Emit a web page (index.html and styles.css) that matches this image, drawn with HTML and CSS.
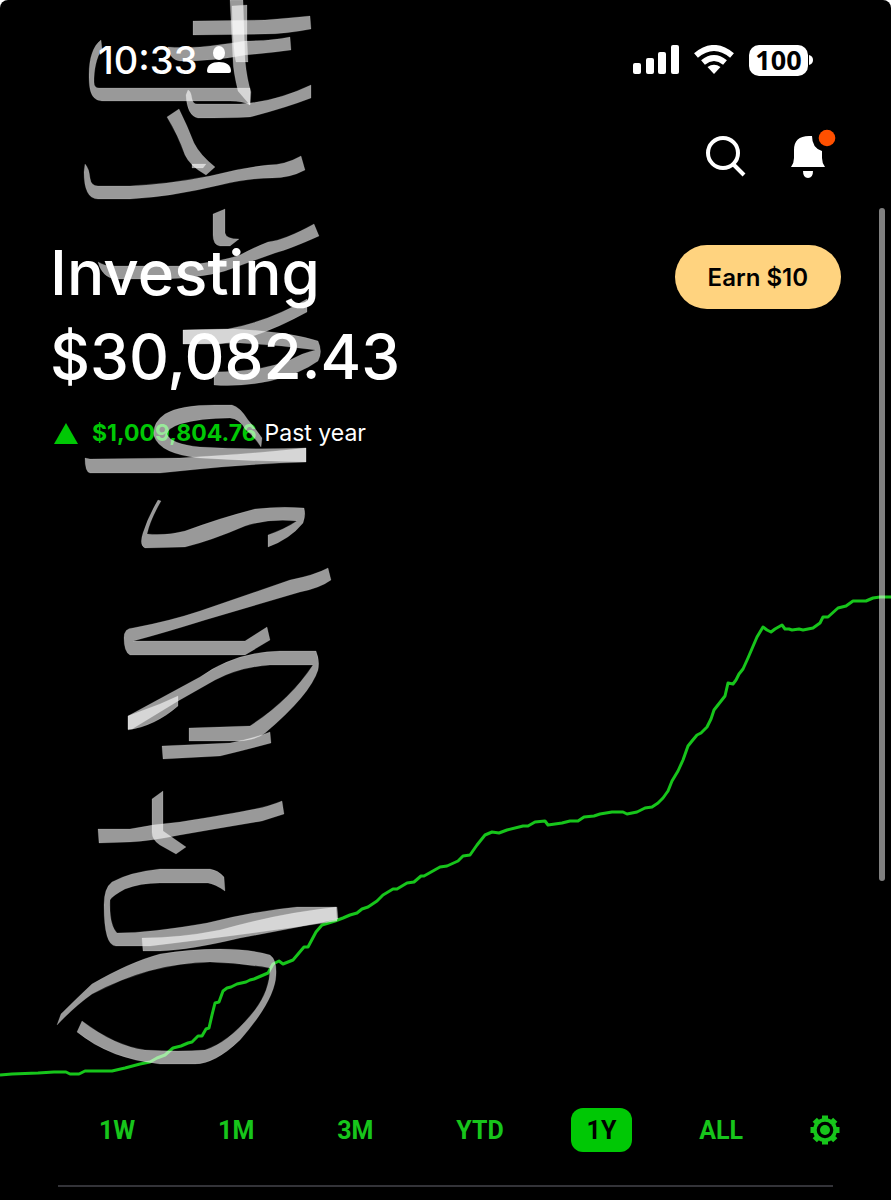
FILE: index.html
```
<!DOCTYPE html>
<html lang="en">
<head>
<meta charset="utf-8">
<meta name="viewport" content="width=device-width, initial-scale=1">
<title>Investing</title>
<link rel="stylesheet" href="styles.css">
</head>
<body>
<div class="screen">
  <div class="status">
    <div class="status-left">
      <span class="clock">10:33</span>
      <svg width="25" height="28" viewBox="0 0 25 28" fill="#fff" aria-hidden="true"><ellipse cx="13" cy="7" rx="6" ry="7"/><path d="M1 25C1 19 6 16 13 16s12 3 12 9q0 2-2 2H3q-2 0-2-2z"/></svg>
    </div>
    <div class="status-right">
      <svg width="46" height="30" viewBox="0 0 46 30" fill="#fff" aria-hidden="true"><rect x="0" y="18" width="8" height="11" rx="2"/><rect x="13" y="13" width="8" height="16" rx="2"/><rect x="25" y="7" width="8" height="22" rx="2"/><rect x="38" y="0" width="8" height="29" rx="2"/></svg>
      <svg width="40" height="30" viewBox="0 0 40 30" fill="none" stroke="#fff" stroke-width="6" aria-hidden="true"><path d="M2 10.500Q20-4.500 38 10.500"/><path d="M9 17.500Q20 8.500 31 17.500"/><path d="M13.500 22Q20 17.500 26.500 22L20 29z" fill="#fff" stroke="none"/></svg>
      <div class="battery"><span class="level">100</span><svg width="5" height="10" viewBox="0 0 5 10" aria-hidden="true"><path d="M1 0Q5 1 5 5T1 10z" fill="#fff"/></svg></div>
    </div>
  </div>

  <nav class="tools">
    <button class="icon-btn" aria-label="Search"><svg width="42" height="44" viewBox="0 0 42 44" fill="none" stroke="#fff" stroke-width="4"><circle cx="19" cy="18" r="15"/><path d="M29 29l11 11"/></svg></button>
    <button class="icon-btn" aria-label="Notifications"><svg width="46" height="50" viewBox="0 0 46 50"><path d="M1 38Q4 34 4 29V21Q4 7 19 7h3Q22 19 32 22v7q0 5 3 9z" fill="#fff"/><path d="M13 42h10q0 7-5 7t-5-7z" fill="#fff"/><circle cx="37" cy="9" r="8.300" fill="#ff5000"/></svg></button>
  </nav>

  <header class="summary">
    <div>
      <h1 class="title">Investing</h1>
      <p class="balance">$30,082.43</p>
    </div>
    <button class="earn">Earn $10</button>
  </header>
  <p class="change">
    <svg width="24" height="21" viewBox="0 0 24 21" aria-hidden="true"><path d="M12 0l12 21H0z" fill="#00c805"/></svg>
    <strong class="gain">$1,009,804.76</strong>
    <span>Past year</span>
  </p>

  <svg class="chart" viewBox="0 480 891 620" role="img" aria-label="Portfolio value over the past year">
    <polyline fill="none" stroke="#17c51b" stroke-width="3" stroke-linejoin="round" points="0,1075 12,1074 38,1073 54,1072 66,1072 70,1074 79,1074 85,1071 112,1071 125,1068 140,1064 150,1062 157,1058 165,1055 173,1048 181,1046 188,1043 192,1042 198,1036 202,1036 206,1029 209,1028 212,1015 215,1003 219,1002 223,991 227,988 231,987 237,984 246,982 250,980 254,979 261,976 268,973 273,964 279,961 283,964 293,960 304,947 308,947 316,932 322,925 335,921 343,918 350,915 357,913 362,909 368,907 377,901 383,895 393,889 397,889 407,883 414,882 421,876 424,876 440,867 447,866 458,861 463,856 470,855 477,845 485,835 492,832 499,833 507,830 523,826 528,826 535,822 545,821 548,825 562,823 570,821 578,821 584,817 594,816 600,814 612,812 623,812 627,814 637,812 645,808 652,807 658,803 663,798 668,791 672,781 678,771 683,760 688,746 692,741 697,735 701,733 707,727 711,719 714,710 725,696 728,683 733,684 736,680 739,674 743,669 748,658 757,637 763,627 767,630 771,632 775,629 782,625 785,629 789,629 792,630 799,629 803,630 813,628 820,623 823,617 828,617 838,608 846,606 853,601 866,601 873,598 880,597 891,597"/>
  </svg>

  <div class="ranges">
    <button class="range">1W</button>
    <button class="range">1M</button>
    <button class="range">3M</button>
    <button class="range">YTD</button>
    <button class="range active" aria-pressed="true">1Y</button>
    <button class="range">ALL</button>
    <button class="icon-btn" aria-label="Chart settings"><svg width="30" height="30" viewBox="-15 -15 30 30" fill="#17c51b"><g id="teeth"><rect x="-3" y="-14.500" width="6" height="29"/><rect x="-14.500" y="-3" width="29" height="6"/></g><use href="#teeth" transform="rotate(45)"/><circle r="12"/><circle r="8.300" fill="#000"/><circle r="5"/></svg></button>
  </div>
  <hr class="rule">

  <svg class="ink" width="350" height="1080" viewBox="0 0 350 1080" aria-hidden="true">
    <path d="M101 40L102 49C96 58 94 70 94 82Q94 88 99 88H250V105Q243 101 230 101H104C92 101 89 93 89 75C89 58 93 46 101 40Z"/>
    <path d="M193 21L265 20Q290 18 310 16L311 29Q285 34 265 34L193 35Z"/>
    <path d="M168 47Q180 48 200 47Q220 45 245 41Q270 41 290 37L291 50Q270 53 245 55Q215 61 180 61Q170 60 168 47Z"/>
    <path d="M230 0H243L245 60Q247 80 251 92L250 105L238 91Q233 70 233 60Z"/>
    <path d="M232 6L247 5V40L248 62H236Q233 50 232 6Z"/>
    <path d="M188 90Q191 91 192 99Q193 104 197 104H240Q275 102 311 85V98Q285 108 250 117Q230 118 198 118Q187 116 186 95Z"/>
    <path d="M167 117L179 109Q187 125 194 143Q200 155 215 167L206 175Q190 166 185 155Q178 135 167 117Z"/>
    <path d="M192 164H206L203 168H192Z"/>
    <path d="M85 164Q89 168 90 178Q91 186 98 186H130Q170 184 210 176Q240 168 268 165Q285 165 301 156L305 170Q290 178 272 178Q250 178 220 185Q170 197 130 199H98Q84 199 84 172Z"/>
    <path d="M213 214L225 209V233Q226 239 239 239L230 246H220Q213 245 213 235Z"/>
    <path d="M98 262Q106 267 115 266H180Q220 262 240 255Q255 247 268 242Q285 240 314 224L319 236Q290 249 275 253Q250 262 225 271Q200 278 160 279H115Q102 277 98 262Z"/>
    <path d="M307 299Q270 321 228 329L183 330V344H220Q260 338 307 312Z"/>
    <path d="M183 330L235 329Q290 332 318 341Q323 352 318 361Q300 374 270 381Q240 387 214 385V372Q260 372 290 360Q305 352 316 350Q280 345 240 343L183 344Z"/>
    <path d="M261 447Q254 436 245 429Q240 419 230 418Q200 418 180 424Q168 428 167 434Q170 444 200 447Q250 450 306 448V462Q250 461 200 458Q160 454 154 436Q152 423 165 414Q180 405 215 405H232Q240 407 248 420Q255 428 262 438Z"/>
    <path d="M85 458L90 459L180 458Q250 454 306 448V462Q250 464 200 469L160 473H90Q85 472 85 458Z"/>
    <path d="M158 500L161 501Q150 520 147 534Q165 536 185 531Q220 518 255 509Q280 506 304 508Q306 515 303 523Q290 539 268 547V535Q285 529 297 521Q270 518 245 526Q210 541 185 547L145 548Q139 545 143 533Q148 517 158 500Z"/>
    <path d="M328 568L331 580Q320 588 300 592L205 620Q160 634 133 641H245L267 627L270 640L245 655H130Q124 652 124 638Q124 628 133 628Q170 621 200 611L290 580Q315 575 328 568Z"/>
    <path d="M128 716L200 677Q235 652 280 651H316Q320 660 318 670Q310 695 265 733Q255 741 235 741H189V728L250 726Q290 700 313 665H270Q240 667 215 680L178 701L132 729H128Z"/>
    <path d="M128 716L160 704L178 696V706Q155 726 128 730Z"/>
    <path d="M162 746L230 743Q255 738 270 732L271 743Q245 750 220 756L163 759Z"/>
    <path d="M98 829H130Q155 824 180 822Q230 814 255 809Q270 806 282 801L284 814L262 821Q220 828 180 835Q150 841 130 842L99 843Z"/>
    <path d="M152 799L163 791V831L186 847L176 854L160 845Q152 840 152 832Z"/>
    <path d="M225 891L224 877Q218 870 210 869H160Q130 872 112 882Q104 888 104 905Q104 946 116 946H150Q250 934 337 921L336 907H297Q255 911 207 923Q150 933 117 933Q109 925 110 900Q112 896 125 889Q140 883 160 883H208Q215 884 225 891Z"/>
    <path d="M142 938Q180 938 220 930Q280 913 337 907L338 919Q300 927 240 938Q190 950 160 951H143Z"/>
    <path d="M57 1025L61 1014Q75 1000 92 984Q130 962 160 954Q190 949 220 949Q250 949 270 955Q277 960 276 975Q275 1000 240 1040Q215 1064 195 1064H160Q110 1059 77 1032L82 1021Q115 1046 145 1050Q180 1052 205 1050Q230 1042 255 1010Q270 990 270 968Q240 963 210 962Q150 963 92 994Q75 1006 57 1025Z"/>
  </svg>
  <div class="scrollbar"></div>
</div>
</body>
</html>
```

FILE: styles.css
```
* { box-sizing: border-box; }
html { background: #fff; }
body { margin: 0; }
button { border: 0; padding: 0; background: none; color: inherit; font: inherit; cursor: pointer; }
svg { display: block; }
h1, p { margin: 0; font-weight: 400; }

.screen {
  position: relative;
  min-height: 100vh;
  border-radius: 8px 8px 0 0;
  background: #000;
  color: #fff;
  font-family: Inter, "Liberation Sans", sans-serif;
  overflow: hidden;
}

.status {
  display: flex;
  justify-content: space-between;
  align-items: center;
  padding: 40px 78px 0 98px;
}
.status-left, .status-right { display: flex; align-items: center; }
.status-left { gap: 9px; }
.status-right { gap: 15px; }
.clock { font-size: 38px; line-height: 40px; font-weight: 500; }
.battery { display: flex; align-items: center; }
.level {
  width: 59px;
  padding-bottom: 2px;
  border-radius: 10px;
  background: #fff;
  color: #000;
  font: 700 27px/29px "Open Sans", sans-serif;
  text-align: center;
}

.tools {
  display: flex;
  justify-content: flex-end;
  align-items: flex-end;
  gap: 44px;
  padding: 49px 55px 0 0;
}

.summary {
  display: flex;
  justify-content: space-between;
  align-items: flex-start;
  padding: 66px 50px 0 50px;
}
.title, .balance { font-size: 62px; line-height: 56px; font-weight: 500; }
.balance { padding-top: 28px; }
.earn {
  padding: 2px 33px 0;
  border-radius: 32px;
  background: #ffd37f;
  color: #000;
  font-size: 24px;
  font-weight: 600;
  line-height: 62px;
}
.change {
  display: flex;
  align-items: center;
  padding: 32px 50px 0 54px;
  font-size: 23px;
  line-height: 32px;
}
.gain { margin: 0 8px 0 14px; color: #00c805; font-weight: 700; }

.chart { width: 100%; margin-top: 31px; }

.ranges {
  display: flex;
  justify-content: space-between;
  align-items: center;
  padding: 8px 51px 0 83px;
  color: #17c51b;
  font: 700 25px/42px Roboto, sans-serif;
}
.range { padding: 2px 16px 0; border-radius: 12px; }
.active { background: #00c805; color: #000; }

.rule { height: 2px; margin: 33px 58px 0; border: 0; background: #333338; }

.ink {
  position: absolute;
  top: 0;
  left: 0;
  fill: #fff;
  fill-opacity: 0.6;
  stroke: #fff;
  stroke-opacity: 0.15;
  stroke-width: 1;
  stroke-linejoin: round;
  pointer-events: none;
}
.scrollbar {
  position: absolute;
  top: 208px;
  right: 6px;
  width: 6px;
  height: 673px;
  border-radius: 3px;
  background: #fff;
  opacity: 0.5;
}
```
